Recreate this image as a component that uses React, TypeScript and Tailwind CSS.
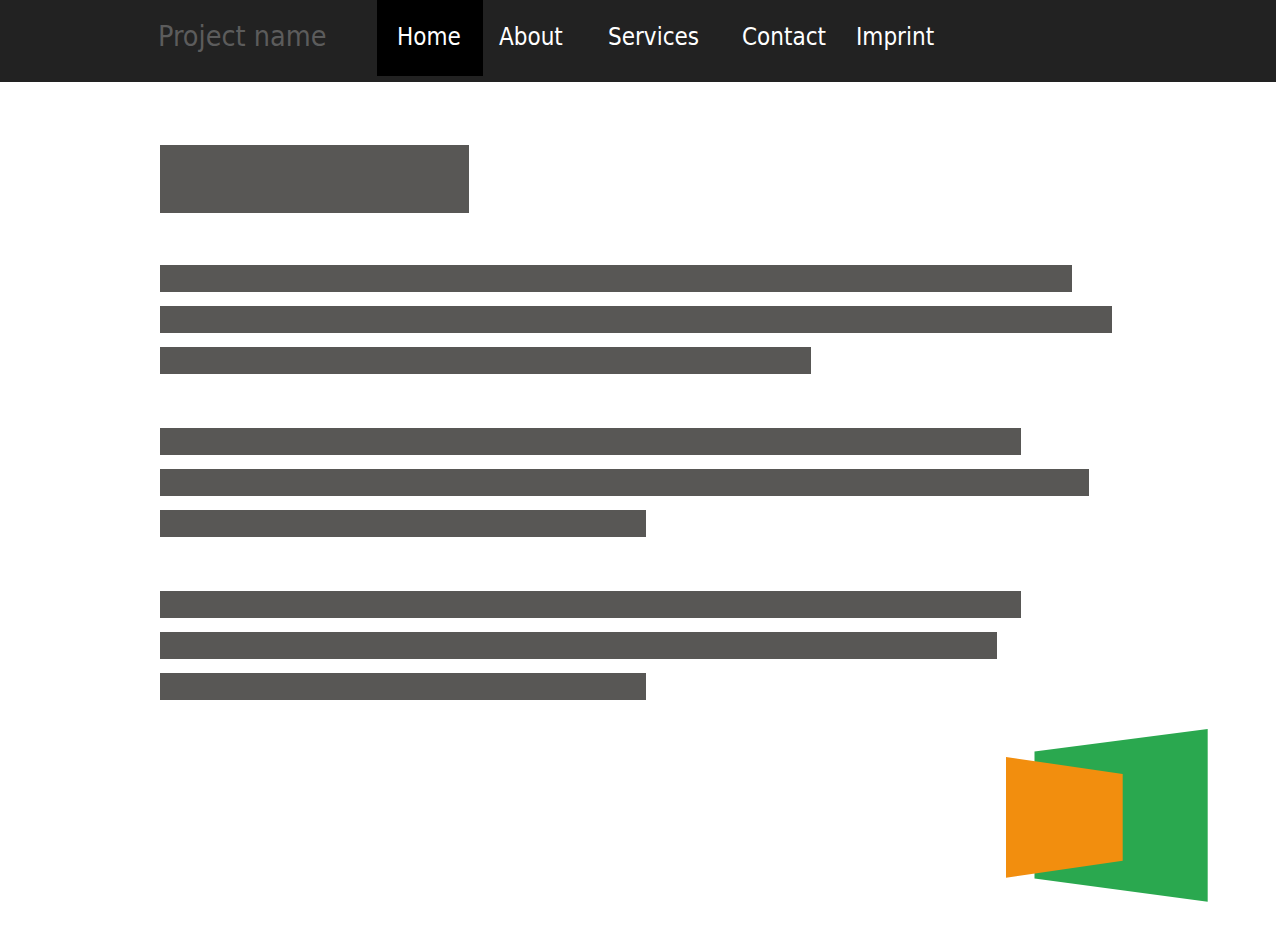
const navItems = [
  { label: "Home", className: "w-[106px] pl-5 bg-black" },
  { label: "About", className: "w-[125px] pl-4" },
  { label: "Services", className: "w-[134px]" },
  { label: "Contact", className: "w-[114px]" },
  { label: "Imprint", className: "" },
];

const paragraphs = [
  ["w-[912px]", "w-[952px]", "w-[651px]"],
  ["w-[861px]", "w-[929px]", "w-[486px]"],
  ["w-[861px]", "w-[837px]", "w-[486px]"],
];

export default function App() {
  return (
    <div className="min-h-[936px] bg-white font-['DejaVu_Sans_Condensed','DejaVu_Sans',sans-serif]">
      <nav className="h-[82px] bg-[#222222] flex items-start pl-[158px]">
        <a className="w-[219px] h-[74px] flex items-center text-[28.5px] text-[#5c5c5c]">Project name</a>
        <ul className="flex">
          {navItems.map((item) => (
            <li key={item.label} className={`h-[76px] pb-[3px] flex items-center text-[24px] text-white ${item.className}`}>
              {item.label}
            </li>
          ))}
        </ul>
      </nav>

      <main className="pl-40">
        <div className="pt-[63px] pb-[52px]">
          <div className="w-[309px] h-[68px] bg-[#585755]" />
        </div>
        <div className="flex flex-col gap-[54px]">
          {paragraphs.map((lines, i) => (
            <div key={i} className="flex flex-col gap-[14px]">
              {lines.map((w, j) => (
                <div key={j} className={`h-[27px] bg-[#585755] ${w}`} />
              ))}
            </div>
          ))}
        </div>
      </main>

      <div className="flex justify-end pt-[29px] pr-[68px]">
        <svg width="202" height="173" viewBox="0 0 202 173">
          <polygon points="28.5,22.5 201.7,0 201.7,172.7 28.5,149.5" fill="#2AA84F" />
          <polygon points="0,28 116.7,45 116.7,131.7 0,148.8" fill="#F28E0E" />
        </svg>
      </div>
    </div>
  );
}
